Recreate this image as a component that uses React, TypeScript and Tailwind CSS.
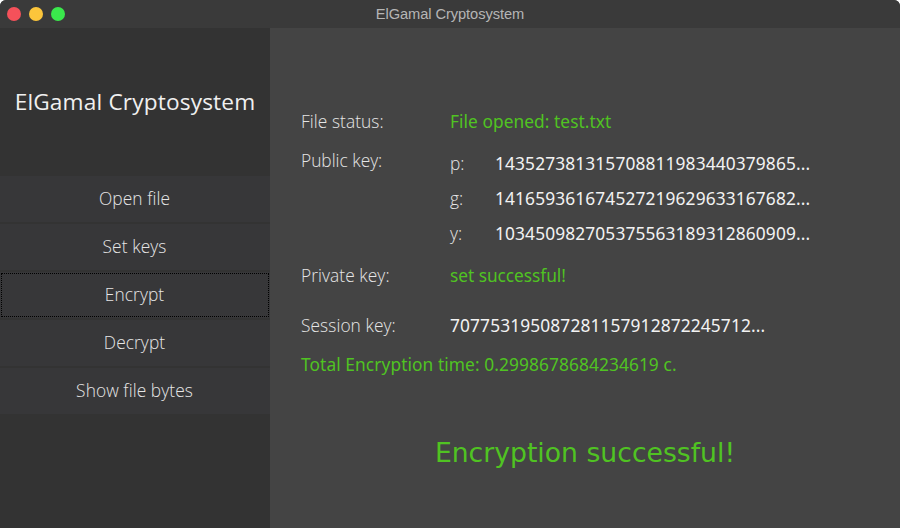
const buttons = ["Open file", "Set keys", "Encrypt", "Decrypt", "Show file bytes"];
const label = "w-[149px] font-light tracking-[0.07px]";
const value = "font-['Noto_Sans',sans-serif] text-[#f2f2f2] tracking-[0.12px]";
const ok = "font-['Noto_Sans',sans-serif] text-[#50c322]";

export default function App() {
  return (
    <div className="bg-white">
      <div className="flex h-[528px] w-[900px] flex-col overflow-hidden rounded-t-[6px] bg-[#444444] font-['Open_Sans',sans-serif] text-[17.33px] leading-6 text-[#e6e6e6]">
        <header className="relative flex h-7 shrink-0 items-center justify-center bg-[#3a3a3a] font-['Liberation_Sans',sans-serif] text-[14.67px] tracking-[-0.08px] text-[#b5b5b5]">
          <div className="absolute left-[7px] flex gap-2">
            <i className="size-3.5 rounded-full bg-[#f5515a]" />
            <i className="size-3.5 rounded-full bg-[#fcc53b]" />
            <i className="size-3.5 rounded-full bg-[#3ae84c]" />
          </div>
          ElGamal Cryptosystem
        </header>
        <div className="flex flex-1">
          <aside className="w-[270px] bg-[#333333]">
            <h1 className="flex h-[148px] items-center justify-center font-['Open_Sans',sans-serif] text-[22.67px] tracking-[0.15px] whitespace-nowrap text-[#f0f0f0]">ElGamal Cryptosystem</h1>
            <nav className="flex flex-col gap-0.5">
              {buttons.map((b) => (
                <button key={b} className="h-[46px] bg-[#373739] p-px font-light tracking-[0.08px]">
                  <span className={`flex h-full items-center justify-center border border-dotted pr-px pb-0.5 ${b === "Encrypt" ? "border-black" : "border-transparent"}`}>{b}</span>
                </button>
              ))}
            </nav>
          </aside>
          <main className="flex-1 pt-[81px] pl-[31px]">
            <div className="flex"><span className={label}>File status:</span><span className={`tracking-[0.05px] ${ok}`}>File opened: test.txt</span></div>
            <div className="mt-[15px] flex">
              <span className="w-[149px] font-light">Public key:</span>
              <div className="mt-[3px] grid grid-cols-[45px_auto] gap-y-[11px] font-light">
                <span>p:</span><span className={`font-normal ${value}`}>143527381315708811983440379865...</span>
                <span>g:</span><span className={`font-normal ${value}`}>141659361674527219629633167682...</span>
                <span>y:</span><span className={`font-normal ${value}`}>103450982705375563189312860909...</span>
              </div>
            </div>
            <div className="mt-[18px] flex"><span className={label}>Private key:</span><span className={`tracking-[-0.05px] ${ok}`}>set successful!</span></div>
            <div className="mt-[26px] flex"><span className={label}>Session key:</span><span className={value}>707753195087281157912872245712...</span></div>
            <p className={`mt-[15px] tracking-[0.08px] ${ok}`}>Total Encryption time: 0.2998678684234619 с.</p>
            <p className="mt-[59px] -ml-[31px] text-center font-['DejaVu_Sans',sans-serif] text-[26.67px] leading-[36px] text-[#50c322]">Encryption successful!</p>
          </main>
        </div>
      </div>
    </div>
  );
}
